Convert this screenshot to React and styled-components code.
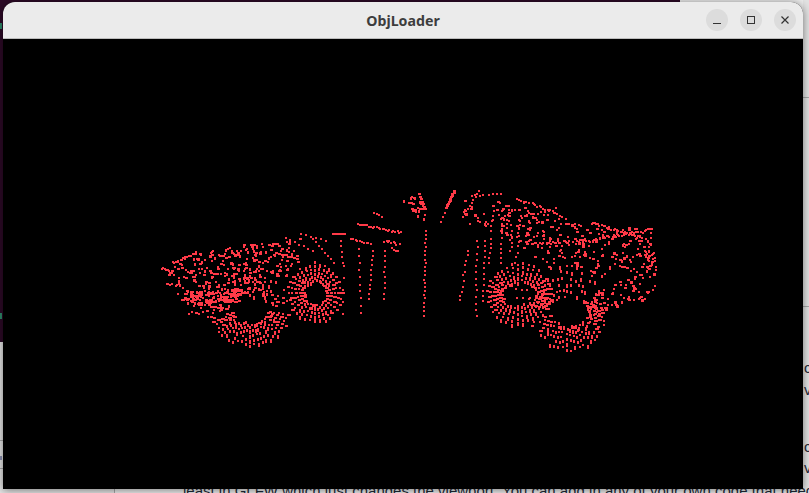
import React, { useMemo } from "react";
import styled, { createGlobalStyle } from "styled-components";

const Global = createGlobalStyle`
  html, body { margin: 0; padding: 0; width: 809px; height: 493px; overflow: hidden; background: #f2f2f2; }
  #root { width: 809px; height: 493px; }
`;

const Desktop = styled.div`
  position: relative;
  width: 809px;
  height: 493px;
  overflow: hidden;
  background: #ececec;
  font-family: "Liberation Sans", Arial, sans-serif;
`;

const Wallpaper = styled.div`
  position: absolute;
  left: 0;
  top: 0;
  width: 680px;
  height: 342px;
  background: #2c0a26;
`;

const LeftEdge = styled.div`
  position: absolute;
  left: 0;
  top: 0;
  width: 115px;
  height: 493px;
  display: grid;
  grid-template-rows: 23px 6px 284px 6px 23px 98px 1px 15px 4px 8px 1px 1fr;
`;

const LeftPanelFill = styled.div`
  grid-row: 6 / -1;
  grid-column: 1;
  background: #e4e4e4;
  border-right: 1px solid #a8a8a8;
`;

const Tick = styled.div`
  grid-column: 1;
  grid-row: ${(p) => p.$row};
  width: ${(p) => p.$width}px;
  background: ${(p) => p.$color};
`;

const RightEdge = styled.div`
  position: absolute;
  left: 803px;
  top: 0;
  width: 6px;
  height: 493px;
  display: grid;
  grid-template-rows: 97px 1px 18px 11px 179px 1px 18px 11px 22px 20px 2px 20px 37px 20px 1px 20px 1fr;
  background: #e2e2e2;
  overflow: hidden;
`;

const EdgeRule = styled.div`
  grid-row: ${(p) => p.$row};
  background: #a8a8a8;
`;

const EdgeMark = styled.div`
  grid-row: ${(p) => p.$row};
  justify-self: end;
  width: 2px;
  background: #dcc8b4;
`;

const EdgeText = styled.div`
  grid-row: ${(p) => p.$row};
  padding-left: 1px;
  font-size: 15px;
  line-height: 20px;
  color: #1f2937;
  white-space: nowrap;
`;

const PageLine = styled.div`
  position: absolute;
  left: 183px;
  top: 481px;
  font-size: 15px;
  line-height: 20px;
  color: #1f2937;
  white-space: nowrap;
`;

const WindowShadow = styled.div`
  position: absolute;
  left: 3px;
  top: 2px;
  width: 800px;
  height: 487px;
  border-radius: 12px 12px 0 0;
  box-shadow: 0 1px 9px rgba(0, 0, 0, 0.5);
`;

const Window = styled.div`
  position: absolute;
  left: 3px;
  top: 2px;
  width: 800px;
  height: 487px;
  display: flex;
  flex-direction: column;
  border-radius: 12px 12px 0 0;
  overflow: hidden;
  background: #000;
`;

const TitleBar = styled.div`
  flex: none;
  height: 36px;
  display: grid;
  grid-template-columns: 1fr auto 1fr;
  align-items: center;
  padding: 0 7px 0 0;
  background: #ebebeb;
  border-bottom: 1px solid #bcbcbc;
`;

const Title = styled.div`
  grid-column: 2;
  font-family: "Noto Sans", "Open Sans", sans-serif;
  font-weight: 700;
  font-size: 14.2px;
  color: #3d3d3d;
  padding-left: 7px;
`;

const Controls = styled.div`
  grid-column: 3;
  justify-self: end;
  display: flex;
  gap: 12px;
`;

const ControlButton = styled.div`
  width: 22px;
  height: 22px;
  border-radius: 50%;
  background: #dcdcdc;
  display: flex;
  align-items: center;
  justify-content: center;
`;

const Viewport = styled.div`
  flex: 1;
  min-height: 0;
  background: #000;
`;

const Cloud = styled.svg`
  display: block;
  width: 800px;
  height: 450px;
`;

function makeDots() {
  let seed = 20240611;
  const rnd = () => {
    seed = (seed * 1664525 + 1013904223) >>> 0;
    return seed / 4294967296;
  };
  const out = [];
  const dot = (x, y, w = 2, h = 2) => out.push([Math.round(x), Math.round(y), w, h]);

  const ring = (cx, cy, irx, iry, orx, ory, spokes, from, to, keep = 1) => {
    const lines = Math.max(6, Math.round(spokes * 0.75));
    for (let i = 0; i < lines; i++) {
      const a = ((from + ((to - from) * i) / lines) * Math.PI) / 180;
      const steps = 5;
      const phase = rnd();
      for (let s = 0; s < steps; s++) {
        if (rnd() > keep) continue;
        const t = (s + phase) / steps;
        const x = cx + Math.cos(a) * (irx + (orx - irx) * t);
        const y = cy + Math.sin(a) * (iry + (ory - iry) * t);
        const vertical = Math.abs(Math.sin(a)) > 0.6;
        const long = 2 + Math.round(rnd() * 2);
        dot(x, y, vertical ? 2 : long, vertical ? long : 2);
      }
    }
  };

  const inside = (poly, x, y) => {
    let c = false;
    for (let i = 0, j = poly.length - 1; i < poly.length; j = i++) {
      const [xi, yi] = poly[i];
      const [xj, yj] = poly[j];
      if (yi > y !== yj > y && x < ((xj - xi) * (y - yi)) / (yj - yi) + xi) c = !c;
    }
    return c;
  };

  const fill = (poly, n) => {
    const xs = poly.map((p) => p[0]);
    const ys = poly.map((p) => p[1]);
    const x0 = Math.min(...xs), x1 = Math.max(...xs), y0 = Math.min(...ys), y1 = Math.max(...ys);
    let placed = 0, guard = 0;
    while (placed < n && guard++ < n * 60) {
      const x = x0 + rnd() * (x1 - x0);
      const y = y0 + rnd() * (y1 - y0);
      if (inside(poly, x, y)) {
        dot(x, y, rnd() > 0.7 ? 3 : 2, rnd() > 0.85 ? 3 : 2);
        placed++;
      }
    }
  };

  const streak = (x0, y0, x1, y1, n, jitter = 0.7, w = 2, h = 2) => {
    for (let i = 0; i < n; i++) {
      const t = n === 1 ? 0 : i / (n - 1);
      dot(x0 + (x1 - x0) * t + (rnd() - 0.5) * jitter, y0 + (y1 - y0) * t + (rnd() - 0.5) * jitter, w, h);
    }
  };

  // left side body
  fill([[165, 270], [190, 255], [240, 243], [290, 240], [302, 262], [285, 275], [272, 296], [240, 296], [212, 318], [185, 314], [176, 298], [178, 285]], 270);
  fill([[178, 292], [240, 287], [240, 300], [215, 303], [192, 306]], 120);
  streak(161, 267, 172, 273, 9, 1.5);
  streak(172, 262, 196, 252, 18, 2);
  streak(166, 283, 180, 285, 8, 2);
  fill([[197, 251], [225, 246], [258, 240], [300, 236], [296, 250], [240, 255], [200, 260]], 30);
  // arcs near the top of the left body
  streak(262, 262, 275, 252, 6, 1);
  streak(275, 252, 296, 258, 8, 1, 3, 2);
  streak(285, 237, 312, 250, 7, 1);
  streak(300, 233, 325, 240, 6, 1);
  streak(312, 238, 333, 262, 8, 1);
  // left wheel
  ring(249, 309, 18, 12, 41, 36, 34, 8, 172, 0.85);
  ring(249, 309, 24, 12, 42, 44, 26, 185, 355, 0.6);
  // second wheel
  ring(314, 292, 10, 11, 28, 31, 42, 0, 360, 1);
  // dashes and upper streaks
  streak(332, 233, 344, 233, 7, 0.3);
  streak(350, 238, 370, 243, 10, 1);
  streak(357, 223, 400, 232, 24, 1.6);
  streak(373, 212, 381, 216, 4, 1);
  streak(383, 240, 398, 243, 9, 2.5);
  streak(391, 247, 396, 250, 4, 1.5);
  streak(340, 240, 342, 262, 5, 1);
  streak(343, 265, 342, 313, 5, 1);
  streak(358, 248, 360, 312, 10, 1);
  streak(372, 250, 368, 298, 11, 1);
  streak(384, 250, 383, 298, 10, 0.6);
  // top centre
  fill([[402, 200], [420, 192], [424, 210], [424, 222], [412, 214]], 26);
  streak(418, 193, 424, 208, 7, 1, 3, 2);
  streak(453, 190, 445, 207, 12, 0.8, 3, 2);
  streak(445, 207, 440, 221, 4, 0.8);
  // centre line
  streak(425, 230, 423, 314, 22, 1.2);
  // right body
  fill([[464, 198], [510, 200], [552, 212], [600, 222], [652, 230], [651, 272], [655, 290], [640, 302], [612, 306], [600, 290], [575, 265], [552, 272], [535, 256], [510, 240], [490, 232], [462, 222]], 320);
  streak(522, 216, 556, 208, 10, 2);
  streak(516, 198, 555, 212, 20, 2.5);
  streak(590, 222, 640, 236, 30, 2);
  streak(576, 242, 652, 228, 42, 2.4);
  streak(530, 243, 575, 240, 22, 2.2);
  fill([[644, 248], [654, 252], [656, 274], [645, 270]], 28);
  streak(470, 195, 500, 193, 8, 1.5);
  streak(462, 216, 478, 190, 10, 1);
  // right side vertical streaks
  streak(467, 250, 459, 300, 11, 1.3);
  streak(476, 240, 475, 315, 13, 1.2);
  streak(484, 240, 482, 300, 12, 1.2);
  streak(490, 238, 488, 262, 6, 0.8);
  streak(501, 218, 500, 262, 10, 1.2);
  streak(511, 225, 510, 250, 7, 1.2);
  streak(518, 235, 515, 262, 6, 1.2);
  streak(493, 205, 490, 230, 6, 1);
  streak(508, 205, 505, 232, 7, 1);
  streak(520, 215, 516, 236, 6, 1);
  // right ring
  ring(518, 293, 17, 10, 33, 32, 46, 0, 360, 1);
  streak(515, 288, 526, 289, 3, 1);
  streak(516, 297, 528, 298, 3, 1);
  // right wheel
  ring(568, 311, 17, 13, 40, 39, 32, 15, 172, 0.8);
  ring(568, 311, 19, 12, 40, 34, 16, -40, 15, 0.7);
  ring(568, 311, 22, 14, 42, 46, 22, 190, 320, 0.7);
  return out;
}

export default function App() {
  const path = useMemo(
    () => makeDots().map(([x, y, w, h]) => `M${x} ${y}h${w}v${h}h-${w}z`).join(""),
    []
  );

  return (
    <Desktop>
      <Global />
      <Wallpaper />
      <LeftEdge>
        <Tick $row={2} $width={2} $color="#2f8a6a" />
        <Tick $row={4} $width={2} $color="#2f8a6a" />
        <LeftPanelFill />
        <Tick $row={7} $width={3} $color="#a8a8a8" />
        <Tick $row={9} $width={2} $color="#8a8fb0" />
        <Tick $row={11} $width={3} $color="#a8a8a8" />
      </LeftEdge>
      <RightEdge>
        <EdgeRule $row={2} />
        <EdgeMark $row={4} />
        <EdgeRule $row={6} />
        <EdgeMark $row={8} />
        <EdgeText $row={10}>code</EdgeText>
        <EdgeText $row={12}>view</EdgeText>
        <EdgeText $row={14}>code</EdgeText>
        <EdgeText $row={16}>view</EdgeText>
      </RightEdge>
      <PageLine>
        least in GLFW which just changes the viewport. You can add in any of your own code that needs
      </PageLine>
      <WindowShadow />
      <Window>
        <TitleBar>
          <Title>ObjLoader</Title>
          <Controls>
            <ControlButton>
              <svg width="12" height="12" viewBox="0 0 12 12">
                <path d="M2 9.5h8" stroke="#333" strokeWidth="1.2" fill="none" />
              </svg>
            </ControlButton>
            <ControlButton>
              <svg width="12" height="12" viewBox="0 0 12 12">
                <rect x="2.5" y="2.5" width="7" height="7" stroke="#333" strokeWidth="1" fill="none" />
              </svg>
            </ControlButton>
            <ControlButton>
              <svg width="12" height="12" viewBox="0 0 12 12">
                <path d="M2.5 2.5l7 7M9.5 2.5l-7 7" stroke="#333" strokeWidth="1.2" fill="none" />
              </svg>
            </ControlButton>
          </Controls>
        </TitleBar>
        <Viewport>
          <Cloud viewBox="3 39 800 450" shapeRendering="crispEdges">
            <path d={path} fill="#ff3a48" />
          </Cloud>
        </Viewport>
      </Window>
    </Desktop>
  );
}
